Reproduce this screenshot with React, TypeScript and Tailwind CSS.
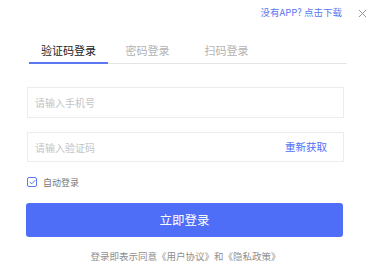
import { useState } from "react";

const FONT = { fontFamily: '"Noto Sans CJK SC", "Liberation Sans", sans-serif' };

const tabs = ["验证码登录", "密码登录", "扫码登录"];

export default function App() {
  const [active, setActive] = useState(0);
  const [auto, setAuto] = useState(true);

  return (
    <div className="relative h-[267px] w-[380px] bg-white" style={FONT}>
      {/* top bar */}
      <div className="flex h-[26px] items-center justify-end pr-[13px]">
        <a className="mr-[16px] text-[9.5px] leading-none text-[#5a78f0]">没有APP? 点击下载</a>
        <svg width="9" height="9" viewBox="0 0 10 10" className="text-[#8a8a8a]">
          <path d="M1 1L9 9M9 1L1 9" stroke="currentColor" strokeWidth="1" />
        </svg>
      </div>

      {/* tabs */}
      <div className="ml-[29px] mr-[33px] mt-[17px] flex border-b border-[#e4e4e4]">
        {tabs.map((t, i) => (
          <button
            key={t}
            onClick={() => setActive(i)}
            className={`-mb-px w-[79px] border-b-2 pb-[5px] text-[11px] leading-[14px] ${
              active === i
                ? "border-[#5a78f0] text-[#222]"
                : "border-transparent text-[#b3b3b3]"
            }`}
          >
            {t}
          </button>
        ))}
      </div>

      <div className="ml-[27px] mr-[36px] mt-[23px] flex flex-col">
        <div className="flex h-[31px] items-center border border-[#ececec] px-[7px]">
          <span className="text-[10px] text-[#c4c4c4]">请输入手机号</span>
        </div>
        <div className="mt-[14px] flex h-[30px] items-center justify-between border border-[#ececec] pl-[7px] pr-[16px]">
          <span className="text-[10px] text-[#c4c4c4]">请输入验证码</span>
          <span className="text-[10.5px] text-[#4f6ef7]">重新获取</span>
        </div>

        <label className="mt-[15px] flex items-center" onClick={() => setAuto(!auto)}>
          <span className="flex h-[10px] w-[10px] items-center justify-center rounded-[2px] border border-[#5a78f0]">
            {auto && (
              <svg width="7" height="6" viewBox="0 0 7 6">
                <path d="M0.8 3L2.8 4.8L6.2 1.2" fill="none" stroke="#5a78f0" strokeWidth="1" />
              </svg>
            )}
          </span>
          <span className="ml-[6px] text-[9px] leading-none text-[#777]">自动登录</span>
        </label>

        <button className="-ml-px mt-[16px] h-[34px] w-full rounded-[3px] bg-[#4f6ef7] text-[12.5px] text-white">
          立即登录
        </button>

        <p className="mt-[13px] text-center text-[9.5px] leading-[12px] text-[#8f8f8f]">
          登录即表示同意《用户协议》和《隐私政策》
        </p>
      </div>
    </div>
  );
}
